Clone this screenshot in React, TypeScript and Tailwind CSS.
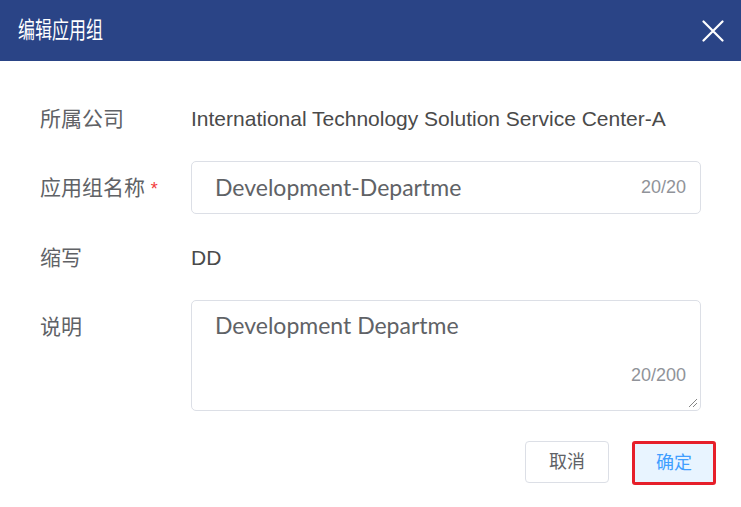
import React from 'react';

const cjk = '"Liberation Sans", "Noto Sans CJK SC", sans-serif';

const App: React.FC = () => {
  return (
    <div className="w-[741px] h-[507px] bg-white flex flex-col" style={{ fontFamily: cjk }}>
      <div className="h-[61px] bg-[#2a4486] flex items-center justify-between pl-[18px] pr-[17px]">
        <span className="inline-block text-white text-[23px] scale-x-[0.74] origin-left">编辑应用组</span>
        <svg width="22" height="22" viewBox="0 0 22 22" className="text-white">
          <path d="M1.5 1.5 L20.5 20.5 M20.5 1.5 L1.5 20.5" stroke="currentColor" strokeWidth="2.2" strokeLinecap="round" />
        </svg>
      </div>

      <div className="flex flex-col pl-[40px] pr-[40px]">
        <div className="flex items-center h-[40px] mt-[38px]">
          <div className="w-[151px] text-[21px] text-[#606266]">所属公司</div>
          <div className="text-[21px] text-[#4a4a4a]">International Technology Solution Service Center-A</div>
        </div>

        <div className="flex items-center mt-[22px]">
          <div className="w-[151px] text-[21px] text-[#606266]">
            应用组名称 <span className="text-[#f23c3c] text-[18px]">*</span>
          </div>
          <div className="w-[510px] h-[53px] border border-[#dcdfe6] rounded-[5px] flex items-center justify-between pl-[23px] pr-[14px]">
            <span className="text-[23px] text-[#606266]" style={{ fontFamily: 'Lato, sans-serif' }}>Development-Departme</span>
            <span className="text-[18px] text-[#909399]">20/20</span>
          </div>
        </div>

        <div className="flex items-center h-[40px] mt-[24px]">
          <div className="w-[151px] text-[21px] text-[#606266]">缩写</div>
          <div className="text-[21px] text-[#4a4a4a]">DD</div>
        </div>

        <div className="flex items-start mt-[22px]">
          <div className="w-[151px] text-[21px] text-[#606266] pt-[11px]">说明</div>
          <div className="relative w-[510px] h-[111px] border border-[#dcdfe6] rounded-[5px] pl-[23px] pt-[7px]">
            <span className="text-[23px] text-[#606266]" style={{ fontFamily: 'Lato, sans-serif' }}>Development Departme</span>
            <span className="absolute right-[14px] bottom-[21px] text-[18px] text-[#909399]">20/200</span>
            <svg width="10" height="10" viewBox="0 0 10 10" className="absolute right-[2px] bottom-[2px]">
              <path d="M9 1 L1 9 M9 5 L5 9" stroke="#666" strokeWidth="0.8" />
            </svg>
          </div>
        </div>

        <div className="flex justify-end gap-[23px] mt-[30px] -mr-[15px]">
          <div className="w-[84px] h-[42px] border border-[#dcdfe6] rounded-[4px] flex items-center justify-center text-[18px] text-[#606266]">取消</div>
          <div className="w-[84px] h-[44px] border-[3px] border-[#e61f2a] rounded-[3px] bg-[#e8f4ff] flex items-center justify-center text-[18px] text-[#409eff]">确定</div>
        </div>
      </div>
    </div>
  );
};

export default App;
